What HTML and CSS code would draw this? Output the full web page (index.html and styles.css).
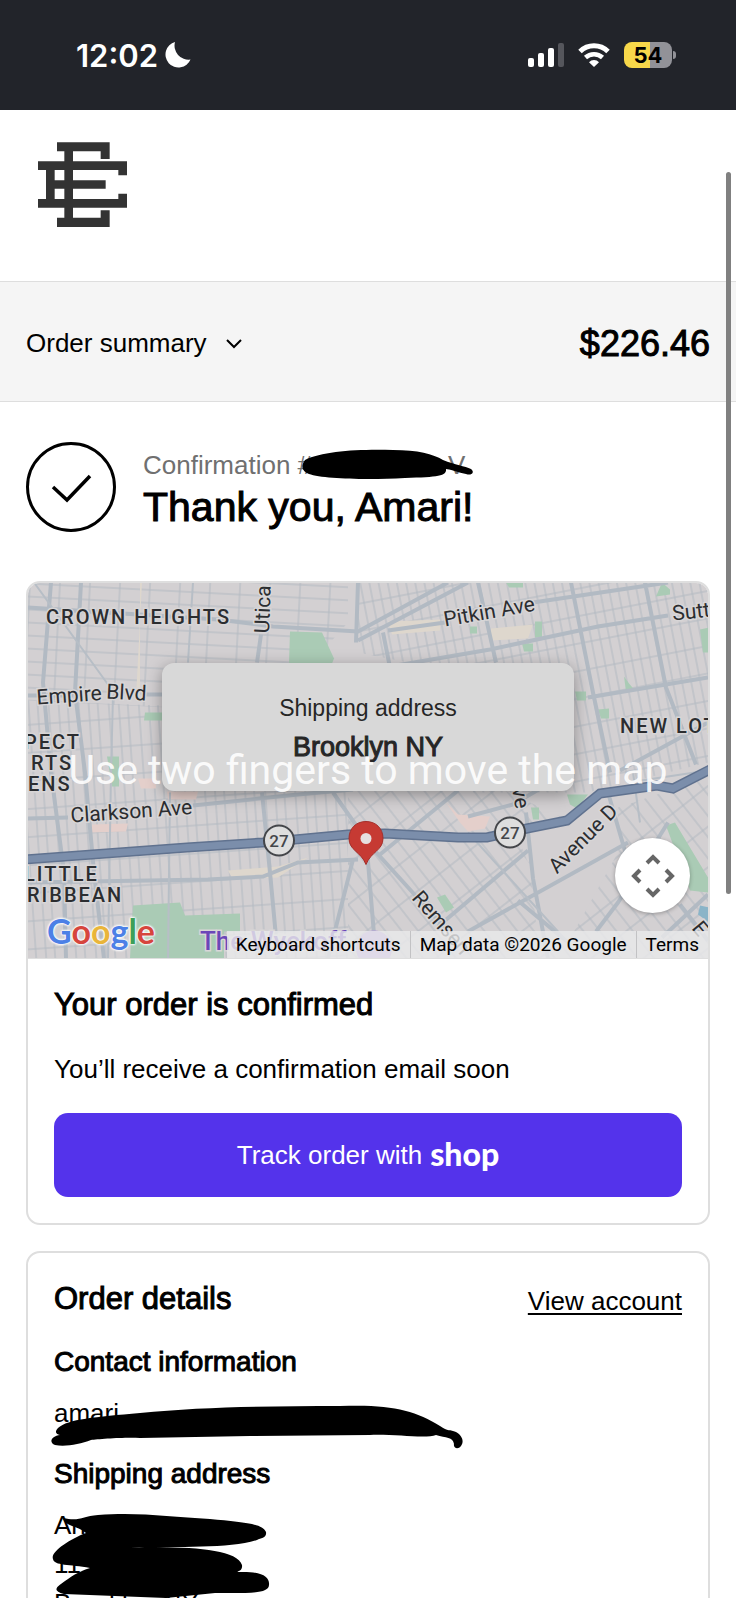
FILE: index.html
```html
<!DOCTYPE html>
<html lang="en">
  <head>
    <meta charset="utf-8" />
    <meta name="viewport" content="width=device-width, initial-scale=1" />
    <title>Thank you, Amari!</title>
    <link rel="stylesheet" href="styles.css" />
  </head>
  <body>
    <!-- Status bar -->
    <div class="status-bar">
      <div class="status-left">
        <span class="time">12:02</span>
        <svg width="26" height="26" viewBox="0 0 26 26">
          <path fill="#fff" d="M10 0A13 13 0 1 0 25.500 17.500A14 14 0 0 1 10 0Z" />
        </svg>
      </div>
      <div class="status-right">
        <svg width="36" height="24" viewBox="0 0 36 24" fill="#fff">
          <rect x="0" y="15" width="6" height="9" rx="2" />
          <rect x="10" y="10" width="6" height="14" rx="2" />
          <rect x="20" y="5" width="6" height="19" rx="2" />
          <rect x="30" y="0" width="6" height="24" rx="2" fill="#55565c" />
        </svg>
        <svg width="32" height="24" viewBox="0 0 32 24" fill="none" stroke="#fff">
          <path stroke-width="5" d="M2 8.500a20 20 0 0 1 28 0" />
          <path stroke-width="4.500" d="M7.500 14.500a12.500 12.500 0 0 1 17 0" />
          <path fill="#fff" stroke="none" d="M11 19.200a7 7 0 0 1 10 0L16 24z" />
        </svg>
        <div class="battery"><span>54</span></div>
      </div>
    </div>

    <div class="scroll-thumb"></div>

    <header class="site-header">
      <a href="#" aria-label="Home">
        <svg class="logo" viewBox="0 0 267 255" fill="#333">
          <path d="M57 1H215V51H188V28H105V58H267V100H241V84H105V115H203V140H105V171H241V155H267V197H105V227H188V205H215V255H57V227H79V197H0V171H24V84H0V58H79V28H57Z" />
          <path fill="#fff" d="M50 84H79V115H50ZM50 140H79V171H50Z" />
        </svg>
      </a>
    </header>

    <button class="order-summary" type="button">
      <span class="summary-label">
        Order summary
        <svg width="18" height="12" viewBox="0 0 18 12" fill="none" stroke="#000" stroke-width="2">
          <path d="M2 2l7 7 7-7" />
        </svg>
      </span>
      <span class="total">$226.46</span>
    </button>

    <main>
      <div class="confirmation">
        <svg class="check" viewBox="0 0 90 90" fill="none" stroke="#000" stroke-width="3">
          <circle cx="45" cy="45" r="43.500" />
          <path stroke-width="3.500" d="M27 45l14 13 23-24" />
        </svg>
        <div class="confirmation-text">
          <p class="number">Confirmation #<span class="hidden-number"></span>V</p>
          <h1>Thank you, Amari!</h1>
          <svg class="scribble" width="340" height="44" viewBox="0 0 340 44">
            <path d="M162 17C180 8 215 6 250 7C275 7 290 11 300 17C312 22 322 23 328 26C332 29 329 33 323 31C314 29 306 26 303 26C304 33 295 34 262 35C225 37 180 36 166 31C158 28 158 22 162 17Z" />
          </svg>
        </div>
      </div>

      <section class="card">
        <div class="map">
          <svg class="map-canvas" viewBox="0 0 680 376" preserveAspectRatio="xMidYMid slice">
            <defs>
              <pattern id="gridNw" width="30" height="13" patternUnits="userSpaceOnUse" patternTransform="rotate(3)">
                <path class="street" d="M0 1H30M2 0V13" />
              </pattern>
              <pattern id="gridSw" width="30" height="28" patternUnits="userSpaceOnUse" patternTransform="rotate(-4)">
                <path class="street" d="M0 2H30M1 0V28M12 0V28M22 0V28" />
              </pattern>
              <pattern id="gridNe" width="9" height="27" patternUnits="userSpaceOnUse" patternTransform="rotate(-11)">
                <path class="street" d="M0 3H9M2 0V27" />
              </pattern>
              <pattern id="gridSe" width="13" height="32" patternUnits="userSpaceOnUse" patternTransform="rotate(-38)">
                <path class="street" d="M0 3H13M2 0V32" />
              </pattern>
            </defs>
            <rect width="680" height="376" fill="#d3d0d2" />

            <path fill="url(#gridNw)" d="M0 0H320V40L240 130L0 118Z" />
            <path fill="url(#gridSw)" d="M0 118L320 130V376H0Z" />
            <path fill="url(#gridNe)" d="M330 0H680V180L560 210L440 210L380 80L330 70Z" />
            <path fill="url(#gridSe)" d="M320 205H470L545 240L680 195V376H320Z" />
            <path fill="#d3d0d2" d="M500 262L560 225L590 215L590 270L540 360H510ZM487 248L540 240L500 280Z" />

            <!-- parks and shopping areas -->
            <g fill="#aacbb5">
              <path d="M262 49L294 50 306 76 304 81H261Z" />
              <path d="M117 130H136V138H116ZM79 174H91V204H84ZM105 323L152 320 157 333 212 331V349H196V376H102Z" />
              <path d="M478 0H495V5H481ZM442 44H449V51H442ZM507 39H514V55H507ZM494 61H505V69H496ZM628 14L642 12V7L634 0ZM672 47L681 45V70H675ZM596 94L601 101 607 108 598 109ZM547 109H558V118H549ZM570 127L581 126V136H573Z" />
              <path d="M539 212H560L549 226 542 222ZM503 225H511V237H505ZM638 243L647 240 680 295 680 310 662 308ZM409 315L417 312 426 325 418 330Z" />
            </g>
            <path fill="#e4cfcb" d="M418 220L430 232 462 234 457 246 440 249 432 240ZM64 242L100 241 98 249 62 250ZM139 209H170L168 217H140ZM110 196H128V206H113Z" />
            <path fill="#ded7cd" d="M116 0H114L108 115H112V0ZM463 46L505 42 500 56 462 58ZM360 39L412 37V48L364 52ZM200 288L250 284 280 275 250 295 205 297Z" />
            <path fill="#8ab4c8" d="M672 323L681 325V340L670 332Z" />

            <!-- avenues -->
            <g class="road">
              <path d="M23 0L15 100 23 190 36 290 38 376M53 0L47 110 57 190 66 290 76 376M0 25L190 37 245 44 330 49 420 0" />
              <path d="M330 0L328 60M233 52L229 80M355 50L362 85M330 58L440 0M0 113H45M118 112H136M0 236L40 235M165 223L270 212 325 207" />
              <path d="M360 48L417 40M505 20L640 0M345 87L462 67 570 44 640 33M450 0L468 80M543 0L565 110 582 190M617 0L638 105 668 182M560 115L680 95" />
              <path d="M0 300L180 297 235 294 270 280 330 277M234 210L242 290 250 376M325 277L300 376M338 255L348 376M305 210L343 264 430 360" />
              <path d="M352 272L430 208M498 230L505 296 520 376M410 344L500 268M440 349L600 260M490 318L540 360M580 210L598 272M568 349L590 320 640 240M634 355L680 312M592 188L680 140M652 322L680 358M440 234L485 222 540 190" />
            </g>
            <path class="thin-road" d="M6 0L88 113M85 113L83 190 80 376M165 0L160 80M142 210L140 376M600 200L680 188M605 190L612 240M440 250L540 360" />

            <!-- Linden Blvd -->
            <path class="highway-edge" d="M-4 277L159 265 235 260 320 252 357 251 430 255 459 255 499 246 539 238 572 211 629 203 645 206 684 186" />
            <path class="highway" d="M-4 277L159 265 235 260 320 252 357 251 430 255 459 255 499 246 539 238 572 211 629 203 645 206 684 186" />

            <g class="shield">
              <circle cx="251" cy="258" r="15" />
              <text x="251" y="264" text-anchor="middle">27</text>
              <circle cx="482" cy="250" r="15" />
              <text x="482" y="256" text-anchor="middle">27</text>
            </g>

            <g class="area-name">
              <text x="18" y="41">CROWN HEIGHTS</text>
              <text x="592" y="150">NEW LOTS</text>
              <text x="-4" y="166">PECT</text>
              <text x="3" y="187">RTS</text>
              <text x="0" y="208">ENS</text>
              <text x="-4" y="298">LITTLE</text>
              <text x="-1" y="319">RIBBEAN</text>
            </g>
            <g class="street-name">
              <text transform="translate(241 51) rotate(-88)">Utica</text>
              <text transform="translate(9 122) rotate(-4)">Empire</text>
              <text transform="translate(78 116) rotate(3)">Blvd</text>
              <text transform="translate(417 44) rotate(-10)">Pitkin Ave</text>
              <text transform="translate(645 38) rotate(-6)">Sutter Ave</text>
              <text transform="translate(43 240) rotate(-4)">Clarkson Ave</text>
              <text transform="translate(484 206) rotate(80)">ve</text>
              <text transform="translate(529 292) rotate(-45)">Avenue D</text>
              <text transform="translate(383 316) rotate(49)">Remsen</text>
              <text transform="translate(663 346) rotate(50)">E</text>
            </g>
            <circle cx="346" cy="366" r="18" fill="#b59bdd" />
            <text class="poi" x="172" y="367">The Wyckoff</text>

            <!-- marker -->
            <path fill="#c63a33" stroke="#a52f2a" d="M338 239c-10 0-17 7-17 17 0 12 12 13 17 26 5-13 17-14 17-26 0-10-7-17-17-17z" />
            <circle cx="338" cy="256" r="5.500" fill="#e6dfdf" />
          </svg>

          <div class="address-popup">
            <span>Shipping address</span>
            <strong>Brooklyn NY</strong>
          </div>
          <p class="gesture-hint">Use two fingers to move the map</p>

          <a class="google" href="#"><span class="b">G</span><span class="r">o</span><span class="y">o</span><span class="b">g</span><span class="g">l</span><span class="r">e</span></a>

          <button class="camera" type="button" aria-label="Map camera controls">
            <svg width="44" height="44" viewBox="0 0 44 44" fill="none" stroke="#666" stroke-width="4">
              <path d="M16 9l6-6 6 6M16 35l6 6 6-6M9 16l-6 6 6 6M35 16l6 6-6 6" />
            </svg>
          </button>

          <div class="attribution">
            <button type="button">Keyboard shortcuts</button>
            <span>Map data ©2026 Google</span>
            <a href="#">Terms</a>
          </div>
        </div>

        <div class="card-body">
          <h2>Your order is confirmed</h2>
          <p class="email-note">You’ll receive a confirmation email soon</p>
          <button class="track" type="button">Track order with <span class="shop">shop</span></button>
        </div>
      </section>

      <section class="card">
        <div class="card-body details">
          <div class="details-head">
            <h2>Order details</h2>
            <a href="#">View account</a>
          </div>
          <h3>Contact information</h3>
          <div class="redacted">
            <p>amari</p>
            <svg class="scribble" width="420" height="60" viewBox="0 0 420 60">
              <path d="M8 34C18 25 45 23 90 19C150 13 220 12 290 12C340 10 365 16 390 32C398 38 400 35 406 38C413 42 414 48 411 52C408 56 403 54 404 50C403 43 396 44 386 41C376 45 345 40 320 41L200 42L90 44C76 43 48 45 41 46C30 50 16 53 5 51C-2 48 2 42 10 41Q3 39 8 34Z" />
            </svg>
          </div>
          <h3>Shipping address</h3>
          <div class="redacted">
            <p>An</p>
            <p>11</p>
            <p>Brooklyn NY</p>
            <svg class="scribble" width="220" height="96" viewBox="0 0 220 96">
              <path d="M13 12C30 16 32 10 48 9C90 6 120 11 160 13C190 16 212 17 216 26C217 32 211 32 207 34C180 43 130 40 80 42C130 40 187 42 192 59C193 66 186 65 188 66C212 65 220 71 219 79C219 88 198 87 165 87L116 92L14 88C0 84 8 80 18 73C28 66 34 64 40 62C20 58 4 60 3 53C0 46 20 33 36 27C28 20 14 20 13 12Z" />
            </svg>
          </div>
        </div>
      </section>
    </main>
  </body>
</html>
```
FILE: styles.css
```css
* {
  box-sizing: border-box;
}
body {
  position: relative;
  height: 100vh;
  margin: 0;
  overflow: hidden;
  background: #fff;
  color: #000;
  font-family: "Liberation Sans", Arial, sans-serif;
  font-size: 26px;
  line-height: 39px;
}
h1,
h2,
h3,
p {
  margin: 0;
}
h1,
h2,
h3,
.total {
  font-weight: 400;
  -webkit-text-stroke: 1px currentColor;
}
a {
  color: inherit;
}
button {
  border: 0;
  padding: 0;
  font: inherit;
  color: inherit;
}
svg {
  display: block;
}

/* Status bar */
.status-bar {
  display: flex;
  justify-content: space-between;
  align-items: center;
  height: 110px;
  padding: 0 60px 0 76px;
  background: #22242a;
  color: #fff;
  font-family: Inter, sans-serif;
}
.status-left {
  display: flex;
  align-items: center;
  gap: 7px;
}
.status-right {
  display: flex;
  align-items: center;
  gap: 14px;
}
.time {
  font-size: 31px;
  font-weight: 600;
}
.battery {
  position: relative;
  width: 48px;
  height: 26px;
  margin-right: 4px;
  border-radius: 8px;
  background: linear-gradient(to right, #f8d84a 54%, #929298 54%);
  color: #000;
  font-size: 22px;
  font-weight: 700;
  line-height: 26px;
  text-align: center;
}
.battery::after {
  content: "";
  position: absolute;
  top: 9px;
  right: -4px;
  width: 3px;
  height: 8px;
  border-radius: 0 4px 4px 0;
  background: #929298;
}
.scroll-thumb {
  position: absolute;
  z-index: 5;
  top: 172px;
  right: 5px;
  width: 5px;
  height: 722px;
  border-radius: 3px;
  background: #808080;
}

/* Header and summary */
.site-header {
  height: 171px;
  padding: 32px 38px;
}
.logo {
  width: 89px;
  height: 85px;
}
.order-summary {
  display: flex;
  justify-content: space-between;
  align-items: center;
  width: 100%;
  height: 121px;
  padding: 4px 26px 0;
  border-top: 1px solid #dedede;
  border-bottom: 1px solid #dedede;
  background: #f5f5f5;
}
.summary-label {
  display: flex;
  align-items: center;
  gap: 18px;
}
.total {
  font-size: 36px;
}

main {
  padding: 40px 26px 0;
}
.confirmation {
  display: flex;
  align-items: center;
  gap: 27px;
  margin-bottom: 49px;
}
.check {
  width: 90px;
  height: 90px;
}
.confirmation-text {
  position: relative;
  padding-top: 4px;
}
.number {
  color: #707070;
  line-height: 36px;
}
.hidden-number {
  display: inline-block;
  width: 136px;
}
h1 {
  font-size: 41px;
  line-height: 48px;
}
.scribble {
  position: absolute;
  top: 0;
  left: -4px;
  fill: #000;
}
.confirmation-text .scribble {
  left: 0;
}

/* Cards */
.card {
  margin-bottom: 26px;
  border: 2px solid #dedede;
  border-radius: 14px;
  overflow: hidden;
}
.card-body {
  padding: 26px;
}
h2 {
  font-size: 31px;
}
h3 {
  margin-bottom: 13px;
  font-size: 28px;
}
.email-note {
  margin: 26px 0 24px;
}
.track {
  display: flex;
  justify-content: center;
  align-items: center;
  gap: 8px;
  width: 100%;
  height: 84px;
  border-radius: 14px;
  background: #5433eb;
  color: #fff;
}
.shop {
  padding-bottom: 4px;
  font-family: Lato, sans-serif;
  font-size: 32px;
  font-weight: 900;
}
.details-head {
  display: flex;
  justify-content: space-between;
  margin-bottom: 21px;
}
.details-head a {
  padding-top: 3px;
  text-underline-offset: 3px;
}
.redacted {
  position: relative;
  margin-bottom: 21px;
}

/* Map */
.map {
  position: relative;
  height: 376px;
  overflow: hidden;
  border-bottom: 1px solid #dedede;
  font-family: Roboto, sans-serif;
}
.map-canvas {
  width: 100%;
  height: 100%;
}
.street {
  fill: none;
  stroke: #b2b9c1;
  stroke-width: 1;
}
.road {
  fill: none;
  stroke: #b2bac3;
  stroke-width: 4;
}
.thin-road {
  fill: none;
  stroke: #b7bec6;
  stroke-width: 2;
}
.highway-edge {
  fill: none;
  stroke: #60728f;
  stroke-width: 10;
}
.highway {
  fill: none;
  stroke: #7b8eab;
  stroke-width: 7;
}
.shield circle {
  fill: #dedede;
  stroke: #44464a;
  stroke-width: 2;
}
.shield text {
  fill: #44464a;
  font-size: 17px;
  font-weight: 500;
}
.area-name,
.street-name {
  fill: #2b2d30;
  stroke: #d8d6d7;
  stroke-width: 3px;
  paint-order: stroke;
}
.area-name {
  font-size: 20px;
  font-weight: 500;
  letter-spacing: 2px;
}
.street-name {
  font-size: 21px;
}
.poi {
  fill: #6b46b8;
  stroke: #d8d6d7;
  stroke-width: 3px;
  paint-order: stroke;
  font-size: 26px;
  font-weight: 500;
}
.address-popup {
  position: absolute;
  top: 80px;
  left: 50%;
  display: flex;
  flex-direction: column;
  align-items: center;
  width: 412px;
  height: 128px;
  padding-top: 26px;
  transform: translateX(-50%);
  border-radius: 12px;
  background: #d8d8d8;
  box-shadow: 0 4px 16px rgba(0, 0, 0, 0.35);
  color: #262626;
  font-family: "Liberation Sans", Arial, sans-serif;
  font-size: 23px;
}
.address-popup strong {
  font-size: 27px;
  font-weight: 400;
  -webkit-text-stroke: 1px currentColor;
}
.gesture-hint {
  position: absolute;
  top: 168px;
  left: 0;
  width: 100%;
  color: rgba(255, 255, 255, 0.9);
  font-size: 41px;
  text-align: center;
  white-space: nowrap;
}
.google {
  position: absolute;
  bottom: 8px;
  left: 19px;
  font-family: Lato, sans-serif;
  font-size: 34px;
  font-weight: 700;
  text-decoration: none;
  text-shadow: 0 0 2px #fff, 0 0 2px #fff, 0 0 3px #fff, 0 0 3px #fff;
}
.google .b {
  color: #4c80e6;
}
.google .r {
  color: #d6453d;
}
.google .y {
  color: #e9b53a;
}
.google .g {
  color: #3d9f58;
}
.camera {
  position: absolute;
  right: 18px;
  bottom: 45px;
  display: flex;
  justify-content: center;
  align-items: center;
  width: 75px;
  height: 75px;
  border-radius: 50%;
  background: #fff;
  box-shadow: 0 1px 4px rgba(0, 0, 0, 0.3);
}
.attribution {
  position: absolute;
  right: 0;
  bottom: 0;
  display: flex;
  height: 27px;
  background: rgba(234, 234, 235, 0.8);
  font-size: 19px;
  line-height: 28px;
}
.attribution > * {
  padding: 0 9px;
  background: none;
  text-decoration: none;
}
.attribution > * + * {
  border-left: 1px solid #c2c2c4;
}
```
